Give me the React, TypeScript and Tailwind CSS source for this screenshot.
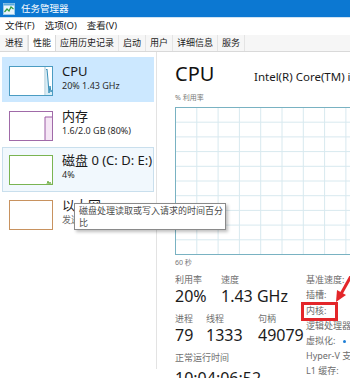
import React from 'react';

const tabs = ['进程', '性能', '应用历史记录', '启动', '用户', '详细信息', '服务'];

// small graphs in the left list
function CpuThumb() {
  return (
    <svg width="44" height="30" viewBox="0 0 44 30" className="block">
      <rect x="0.5" y="0.5" width="43" height="29" fill="#fff" stroke="#4b9cc2" />
      <line x1="36" y1="1" x2="36" y2="29" stroke="#9fc4d4" />
      <polygon points="37,29 37,4 38,3 39,14 40,27 41,20 42,26 43,24 43,29" fill="#d9edf6" />
      <polyline points="37,4 38,3 39,14 40,27 41,20 42,26 43,24" fill="none" stroke="#3a8fb8" />
    </svg>
  );
}

function MemThumb() {
  return (
    <svg width="44" height="30" viewBox="0 0 44 30" className="block">
      <rect x="0.5" y="0.5" width="43" height="29" fill="#fff" stroke="#a06aa8" />
      <rect x="36" y="6" width="7" height="23" fill="#f5e6f5" />
      <polyline points="36,29 36,6 43,6" fill="none" stroke="#9c5ba5" />
    </svg>
  );
}

function DiskThumb() {
  return (
    <svg width="44" height="30" viewBox="0 0 44 30" className="block">
      <rect x="0.5" y="0.5" width="43" height="29" fill="#fff" stroke="#7ab452" />
      <polyline points="38,29 39,26 40,29 41,27 42,29" fill="none" stroke="#7ab452" />
    </svg>
  );
}

function EthThumb() {
  return (
    <svg width="44" height="30" viewBox="0 0 44 30" className="block">
      <rect x="0.5" y="0.5" width="43" height="29" fill="#fff" stroke="#c8925f" />
    </svg>
  );
}

function CpuGraph() {
  const cols = Array.from({ length: 10 }, (_, i) => i * 21.3);
  const rows = Array.from({ length: 10 }, (_, i) => i * 14.7);
  return (
    <svg width="214" height="148" viewBox="0 0 214 148" className="block">
      <rect x="0.5" y="0.5" width="213" height="147" fill="#fff" />
      {cols.map((x) => (
        <line key={'c' + x} x1={x + 0.5} y1="0" x2={x + 0.5} y2="148" stroke="#d8e9ef" />
      ))}
      {rows.map((y) => (
        <line key={'r' + y} x1="0" y1={y + 0.5} x2="214" y2={y + 0.5} stroke="#d8e9ef" />
      ))}
      <rect x="0.5" y="0.5" width="213" height="147" fill="none" stroke="#79b2c2" />
    </svg>
  );
}

function Stat({
  label,
  value,
  className = '',
  valueClass = '',
}: {
  label: string;
  value: string;
  className?: string;
  valueClass?: string;
}) {
  return (
    <div className={className}>
      <div className="text-[9px] leading-[12px] text-[#6f6f6f] whitespace-nowrap">{label}</div>
      <div className={'text-[16px] leading-[20px] text-[#1b1b1b] whitespace-nowrap ' + valueClass}>{value}</div>
    </div>
  );
}

export default function App() {
  return (
    <div className="relative w-[350px] h-[378px] overflow-hidden bg-white font-['Noto_Sans','Noto_Sans_CJK_SC',sans-serif]">
      {/* 标题栏 */}
      <div className="h-[17px] bg-[#0c78d2] flex items-center pl-[3px]">
        <svg width="12" height="12" viewBox="0 0 12 12">
          <rect x="0.5" y="0.5" width="11" height="11" fill="#e9f4fb" stroke="#9cc9e8" />
          <rect x="0.5" y="0.5" width="11" height="2" fill="#5aa9de" />
          <polyline points="1.5,9 4,6 6,8 8,4 10.5,6" fill="none" stroke="#2f9c3f" strokeWidth="1.2" />
        </svg>
        <span className="ml-[6px] text-[9.5px] leading-none text-white">任务管理器</span>
      </div>
      <div className="h-px bg-[#cfe3f3]" />

      {/* 菜单 */}
      <div className="h-[17px] flex items-center gap-[10px] px-[5px] text-[9.5px] text-[#1a1a1a] bg-white">
        <span>文件(F)</span>
        <span>选项(O)</span>
        <span>查看(V)</span>
      </div>

      {/* 标签页 */}
      <div className="h-[17px] flex border-b border-[#d9d9d9] bg-[#f6f6f6] pl-[1px]">
        {tabs.map((t) => (
          <div
            key={t}
            className={
              t === '性能'
                ? 'px-[4px] text-[9px] leading-[16px] text-[#1a1a1a] bg-white border-x border-[#d9d9d9]'
                : 'px-[4px] text-[9px] leading-[16px] text-[#1a1a1a] border-r border-[#e4e4e4]'
            }
          >
            {t}
          </div>
        ))}
      </div>

      <div className="flex">
        {/* 左侧列表 */}
        <div className="w-[157px] shrink-0 h-[317px] border-r border-[#e3e3e3] pt-[5px] pr-[2px] pl-[2px]">
          <div className="h-[45px] bg-[#cce8ff] flex items-start pt-[9px] pl-[7px]">
            <CpuThumb />
            <div className="ml-[9px] -mt-[3px]">
              <div className="text-[13px] leading-[16px] text-[#1a1a1a]">CPU</div>
              <div className="text-[9px] leading-[12px] text-[#2b2b2b] mt-px">20% 1.43 GHz</div>
            </div>
          </div>
          <div className="h-[45px] flex items-start pt-[9px] pl-[7px]">
            <MemThumb />
            <div className="ml-[9px] -mt-[3px]">
              <div className="text-[13px] leading-[16px] text-[#1a1a1a]">内存</div>
              <div className="text-[9px] leading-[12px] text-[#2b2b2b] mt-px">1.6/2.0 GB (80%)</div>
            </div>
          </div>
          <div className="h-[45px] flex items-start pt-[7px] pl-[6px] border border-[#c9dfed] bg-[#f1f8fd]">
            <DiskThumb />
            <div className="ml-[9px] -mt-[3px]">
              <div className="text-[13px] leading-[16px] text-[#1a1a1a] whitespace-nowrap">磁盘 0 (C: D: E:)</div>
              <div className="text-[9px] leading-[12px] text-[#2b2b2b] mt-px">4%</div>
            </div>
          </div>
          <div className="h-[45px] flex items-start pt-[8px] pl-[7px]">
            <EthThumb />
            <div className="ml-[9px] -mt-[3px]">
              <div className="text-[13px] leading-[16px] text-[#1a1a1a]">以太网</div>
              <div className="text-[9px] leading-[12px] text-[#6b6b6b] mt-px whitespace-nowrap">发送: 0 接收: 0 Kbps</div>
            </div>
          </div>
        </div>

        {/* 右侧详情 */}
        <div className="flex-1 min-w-0 pl-[18px] pt-[12px] overflow-hidden">
          <div className="flex items-baseline whitespace-nowrap">
            <div className="w-[79px] shrink-0 text-[20px] leading-[20px] text-[#111]">CPU</div>
            <div className="shrink-0 text-[11.5px] text-[#1a1a1a]">Intel(R) Core(TM) i5-4200U CPU @ 1.60GHz</div>
          </div>
          <div className="mt-[9px] text-[7px] leading-[7px] text-[#777]">% 利用率</div>
          <div className="mt-[6px]">
            <CpuGraph />
          </div>
          <div className="mt-[4px] text-[7px] leading-[7px] text-[#777]">60 秒</div>

          <div className="mt-[7px] flex">
            <div className="w-[131px] shrink-0 pt-[1px]">
              <div className="flex">
                <Stat label="利用率" value="20%" className="w-[46px]" />
                <Stat label="速度" value="1.43 GHz" />
              </div>
              <div className="flex mt-[6.5px]">
                <Stat label="进程" value="79" className="w-[31px]" />
                <Stat label="线程" value="1333" className="w-[52px]" />
                <Stat label="句柄" value="49079" />
              </div>
              <Stat label="正常运行时间" value="10:04:06:52" className="mt-[7px]" valueClass="mt-[4px]" />
            </div>
            <div className="text-[9px] leading-[14.8px] text-[#6d6d6d] whitespace-nowrap">
              <div>基准速度:</div>
              <div>插槽:</div>
              <div className="mt-[1.5px]">内核:</div>
              <div>逻辑处理器:</div>
              <div className="flex items-center">
                <span>虚拟化:</span>
                <span className="ml-[8px] w-[3px] h-[3px] rounded-full bg-[#1e7fd6]" />
              </div>
              <div>Hyper-V 支持:</div>
              <div>L1 缓存:</div>
            </div>
          </div>
        </div>
      </div>

      {/* 提示框 */}
      <div className="absolute left-[74px] top-[203px] w-[152px] h-[27px] bg-white border border-[#8a8a8a] shadow-[2px_2px_3px_rgba(0,0,0,0.25)] px-[4px] pt-px text-[9px] leading-[12px] text-[#4a4a4a]">
        <div className="whitespace-nowrap">磁盘处理读取或写入请求的时间百分</div>
        <div>比</div>
      </div>

      {/* 红色标注 */}
      <div className="absolute left-[301px] top-[302px] w-[37px] h-[19px] border-[3px] border-[#e3262a]" />
      <svg className="absolute left-[334px] top-[276px]" width="16" height="28" viewBox="0 0 16 28">
        <line x1="17" y1="0" x2="7" y2="18" stroke="#e3262a" strokeWidth="3" />
        <polygon points="2,26 3,14 12,19" fill="#e3262a" />
      </svg>
    </div>
  );
}
